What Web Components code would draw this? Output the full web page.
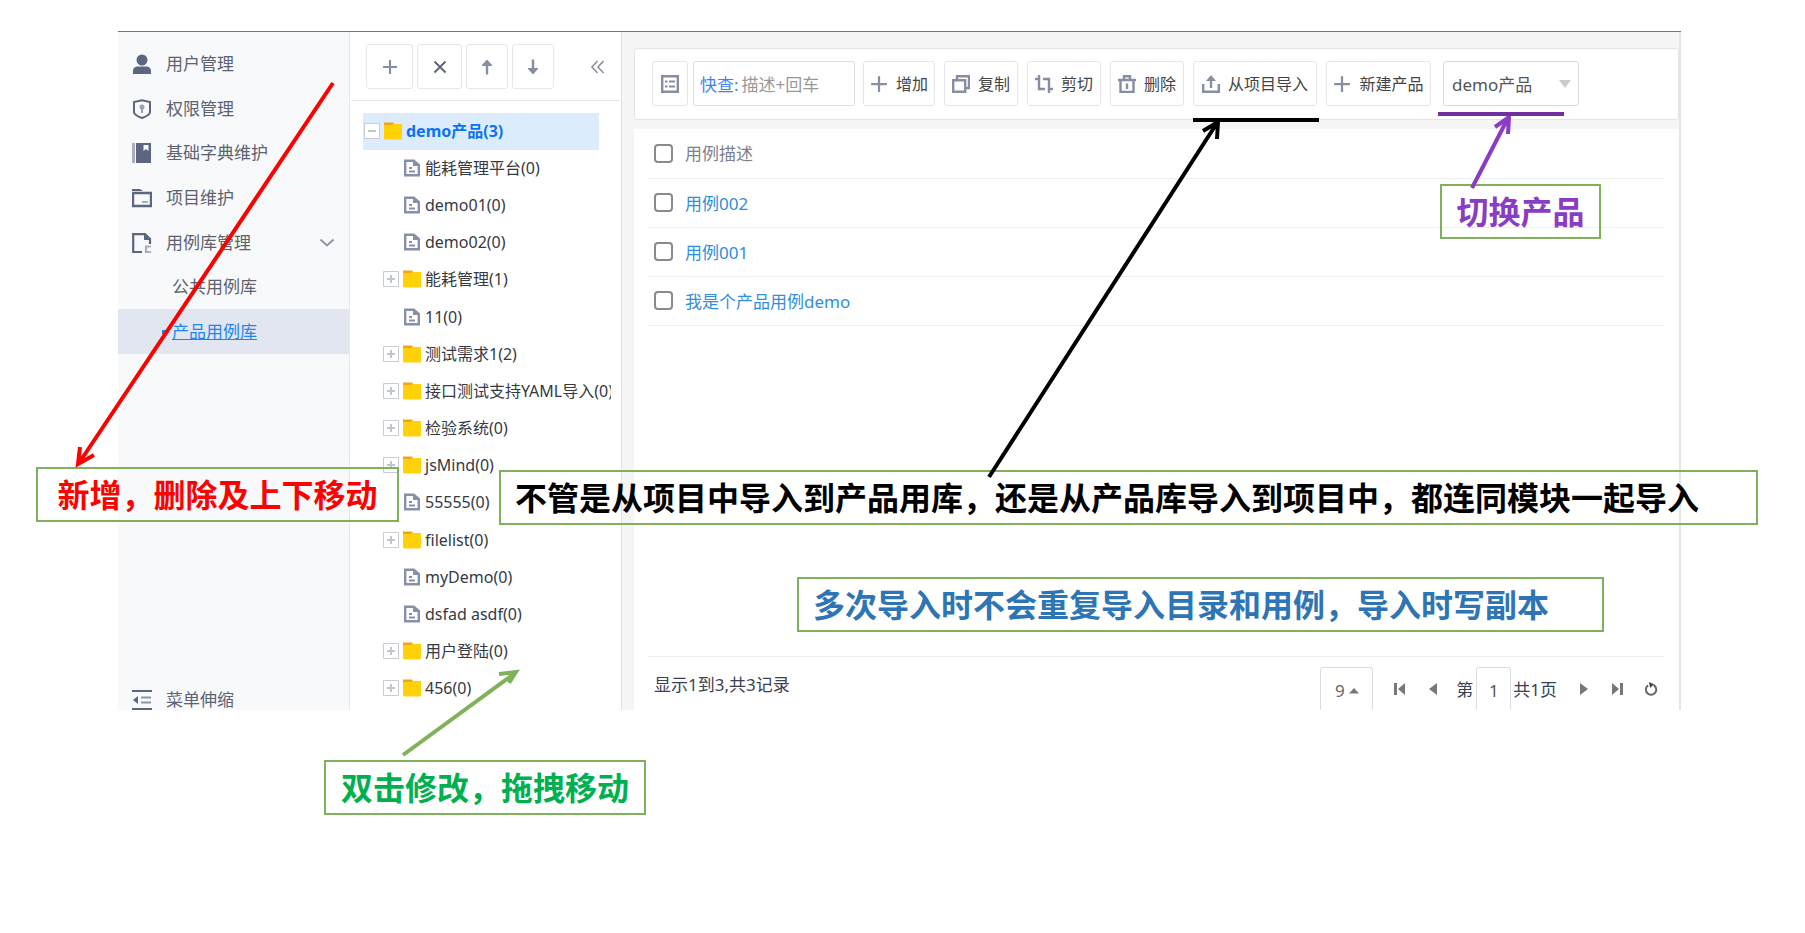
<!DOCTYPE html>
<html lang="zh-CN">
<head>
<meta charset="utf-8">
<meta name="viewport" content="width=device-width, initial-scale=1">
<title>产品用例库</title>
<style>
  body {
    margin: 0;
    background: #fff;
    color: #3c4250;
    font: 17px/24px "Noto Sans", "Noto Sans CJK SC", sans-serif;
  }
</style>
</head>
<body>
<case-app></case-app>

<script>
const ICONS = {
  user: ['0 0 20 20', '<circle cx="10" cy="6" r="5.5" fill="#5c6680"/><path d="M1 20v-3q0-4 4-4.600h10q4 .6 4 4.600v3z" fill="#5c6680"/>'],
  shield: ['0 0 20 20', '<path d="M10 1.200 18 3v10.500q-1 3-8 5.500-7-2.500-8-5.500V3z" fill="none" stroke="#5c6680" stroke-width="2"/><circle cx="10" cy="8" r="2.500" fill="#9aa1b3"/><path d="M9 9h2v5H9z" fill="#9aa1b3"/>'],
  book: ['0 0 20 20', '<path d="M0 0h3v20H0z" fill="#a9afbf"/><path d="M4 0h15v20H4z" fill="#5c6680"/><path d="M11.500 2h5v6l-2.500-2-2.500 2z" fill="#f7f9fb"/>'],
  project: ['0 0 20 20', '<path d="M0 3V1h8l3 2z" fill="#5c6680"/><path d="M1 5h18v13H1z" fill="none" stroke="#5c6680" stroke-width="2.400"/><path d="M10 13h6v2h-6z" fill="#a9afbf"/>'],
  library: ['0 0 20 20', '<path d="M10 19H1.200V1.200H13L18 6v5" fill="none" stroke="#5c6680" stroke-width="2.200"/><path d="M12 1v6h6z" fill="#5c6680"/><path d="M19 13.500h-5V19h5" fill="none" stroke="#a9afbf" stroke-width="2.200"/>'],
  fold: ['0 0 20 20', '<path d="M0 1h20M0 19h20" stroke="#5c6680" stroke-width="2"/><path d="M9 7.500h10M9 12.500h10" stroke="#8d95a8" stroke-width="2"/><path d="M6 6v8L1 10z" fill="#5c6680"/>'],
  down: ['0 0 16 10', '<path d="m1.500 1.500 6.500 6 6.500-6" fill="none" stroke="#8d95a8" stroke-width="2"/>'],
  plus: ['0 0 16 16', '<path d="M8 1v14M1 8h14" stroke="#868ea3" stroke-width="2"/>'],
  cross: ['0 0 16 16', '<path d="m2.500 2.500 11 11m0-11-11 11" stroke="#596074" stroke-width="1.800"/>'],
  up: ['0 0 16 16', '<path d="M8 5v10.500" stroke="#868ea3" stroke-width="2.400"/><path d="M3 7V6l5-5.500L13 6v1z" fill="#868ea3"/>'],
  drop: ['0 0 16 16', '<path d="M8 .5V11" stroke="#868ea3" stroke-width="2.400"/><path d="M3 9v1l5 5.500 5-5.500V9z" fill="#868ea3"/>'],
  collapse: ['0 0 16 16', '<path d="M7.500 2 2 8l5.500 6M13.500 2 8 8l5.500 6" fill="none" stroke="#8a8f9a" stroke-width="1.600"/>'],
  minusbox: ['0 0 16 16', '<path d="M.5.5h15v15H.5z" fill="#fff" stroke="#c9ccd2"/><path d="M4 8h8" stroke="#c2c5cb" stroke-width="2"/>'],
  plusbox: ['0 0 16 16', '<path d="M.5.5h15v15H.5z" fill="#fff" stroke="#c9ccd2"/><path d="M4 8h8M8 4v8" stroke="#c2c5cb" stroke-width="2"/>'],
  folder: ['0 0 18 18', '<path d="M0 5V.5h9L11 3v3z" fill="#f9a01b"/><path d="M0 3h8l2-1.500V2h8v14q0 1.500-1.500 1.500h-15Q0 17.500 0 16z" fill="#ffd109"/>'],
  file: ['0 0 16 18', '<path d="M1.200 1.700h8.600L14.800 6v10.300H1.200z" fill="#fff" stroke="#8890a8" stroke-width="2.400"/><path d="M9 1v6h6.500z" fill="#8890a8"/><path d="M5 9h3M5 12.500h6" stroke="#8890a8" stroke-width="2"/>'],
  list: ['0 0 18 18', '<path d="M1.200 1.200h15.600v15.600H1.200z" fill="none" stroke="#868ea3" stroke-width="2.400"/><path d="M4 6.500h2.500M8 6.500h6M4 11.500h2.500M8 11.500h6" stroke="#868ea3" stroke-width="2"/>'],
  copy: ['0 0 18 18', '<path d="M5 5V1.200h12V13h-3.500" fill="none" stroke="#868ea3" stroke-width="2.400"/><path d="M1.200 5.200h12v11.600h-12z" fill="none" stroke="#868ea3" stroke-width="2.400"/>'],
  cut: ['0 0 18 18', '<path d="M0 4h4m0-4v14h6M8 4h6v14m0-4h4" fill="none" stroke="#868ea3" stroke-width="2.400"/>'],
  bin: ['0 0 18 18', '<path d="M0 5h18M6 4V1.200h6V4M2.500 5v12h13V5" fill="none" stroke="#868ea3" stroke-width="2.400"/><path d="M9 8.500V14" stroke="#868ea3" stroke-width="2.400"/>'],
  share: ['0 0 18 18', '<path d="M1.200 9v7.800h15.600V9M9 13V4" fill="none" stroke="#868ea3" stroke-width="2.400"/><path d="M4 6 9 0l5 6z" fill="#868ea3"/>'],
  first: ['0 0 12 12', '<path d="M0 0h3v12H0zM11 0v12L4 6z" fill="#777"/>'],
  prev: ['0 0 12 12', '<path d="M10 0v12L2 6z" fill="#777"/>'],
  next: ['0 0 12 12', '<path d="M3 0v12l8-6z" fill="#777"/>'],
  last: ['0 0 12 12', '<path d="M9 0h3v12H9zM1 0v12l7-6z" fill="#777"/>'],
  reload: ['0 0 14 14', '<path d="M9.500 3A5.200 5.200 0 1 1 4 3.400" fill="none" stroke="#666" stroke-width="2"/><path d="m5 0 5 2.200L6 6z" fill="#444"/>'],
  caret: ['0 0 10 6', '<path d="M0 5.500 5 0l5 5.500z" fill="#777"/>']
};

const define = (name, html, setup) => {
  const template = document.createElement('template');
  template.innerHTML = html;
  customElements.define(name, class extends HTMLElement {
    connectedCallback() {
      if (this.shadowRoot) return;
      const root = this.attachShadow({ mode: 'open' });
      root.append(template.content.cloneNode(true));
      if (setup) setup(this, root);
    }
  });
};

define('ui-icon', `<style>
  :host { display: inline-block; flex: none; width: 18px; height: 18px; }
  svg { display: block; width: 100%; height: 100%; }
</style>`, (host, root) => {
  const [box, body] = ICONS[host.getAttribute('name')];
  root.innerHTML += `<svg viewBox="${box}" aria-hidden="true">${body}</svg>`;
});

define('nav-item', `<style>
  :host { display: flex; }
  a { flex: 1; display: flex; align-items: center; gap: 14px; padding: 0 14px; color: #5d6270; text-decoration: none; white-space: nowrap; }
  ui-icon { width: 20px; height: 20px; }
  .label { flex: 1; }
  .open { width: 16px; height: 10px; }
  :host([sub]) a { padding-left: 54px; }
  :host([active]) { background: #e2e6f1; }
  :host([active]) a { position: relative; color: #1e86ee; text-decoration: underline; }
  :host([active]) a::before { content: ""; position: absolute; left: 44px; width: 4px; height: 4px; background: #1e86ee; }
</style><a href="#"><span class="label"><slot></slot></span></a>`, (host, root) => {
  const a = root.querySelector('a');
  if (host.hasAttribute('icon')) a.insertAdjacentHTML('afterbegin', `<ui-icon name="${host.getAttribute('icon')}"></ui-icon>`);
  if (host.hasAttribute('expandable')) a.insertAdjacentHTML('beforeend', '<ui-icon class="open" name="down"></ui-icon>');
});

define('side-nav', `<style>
  :host { display: flex; flex-direction: column; justify-content: space-between; box-sizing: border-box; flex: none; width: 232px; padding-top: 10px; background: #f7f9fb; border-right: 1px solid #e6e8eb; }
  nav { display: grid; grid-auto-rows: 1fr; height: 312px; }
  .foot { height: 20px; }
</style>
<nav>
  <nav-item icon="user">用户管理</nav-item>
  <nav-item icon="shield">权限管理</nav-item>
  <nav-item icon="book">基础字典维护</nav-item>
  <nav-item icon="project">项目维护</nav-item>
  <nav-item icon="library" expandable>用例库管理</nav-item>
  <nav-item sub>公共用例库</nav-item>
  <nav-item sub active>产品用例库</nav-item>
</nav>
<nav-item class="foot" icon="fold">菜单伸缩</nav-item>`);

define('tool-button', `<style>
  :host { display: inline-flex; flex: none; }
  button { display: flex; align-items: center; justify-content: center; gap: 8px; width: 100%; height: 45px; padding: 0; background: #fff; border: 1px solid #e4e6ea; border-radius: 3px; color: #444; font: inherit; font-size: 16px; white-space: nowrap; }
  :host([plain]) button { border: 0; background: none; }
  ui-icon { width: var(--icon, 18px); height: var(--icon, 18px); }
</style><button type="button"><slot></slot></button>`, (host, root) => {
  const b = root.querySelector('button');
  b.insertAdjacentHTML('afterbegin', `<ui-icon name="${host.getAttribute('icon')}"></ui-icon>`);
  if (host.title) b.setAttribute('aria-label', host.title);
  if (!host.textContent.trim()) root.querySelector('slot').remove();
});

define('tree-node', `<style>
  :host { display: flex; align-items: center; box-sizing: border-box; padding: 0 0 2px 20px; font-size: 16px; color: #353a45; white-space: nowrap; }
  :host([root]) { width: 236px; padding-left: 1px; background: #dcecfd; color: #0a73f5; font-weight: bold; }
  .toggle { display: flex; width: 16px; height: 16px; padding: 0; border: 0; background: none; margin-right: 4px; }
  .toggle ui-icon { width: 16px; height: 16px; }
  .gap { width: 20px; flex: none; }
  .kind { margin-right: 4px; }
</style><span class="text"><slot></slot></span>`, (host, root) => {
  const folder = host.hasAttribute('folder');
  const toggle = host.hasAttribute('root') ? 'minusbox' : 'plusbox';
  root.querySelector('.text').insertAdjacentHTML('beforebegin', folder
    ? `<button class="toggle" type="button" aria-label="展开或收起"><ui-icon name="${toggle}"></ui-icon></button><ui-icon class="kind" name="folder"></ui-icon>`
    : '<span class="gap"></span><ui-icon class="kind" name="file"></ui-icon>');
});

define('tree-panel', `<style>
  :host { display: flex; flex-direction: column; box-sizing: border-box; flex: none; width: 272px; border-right: 1px solid #e3e3e3; }
  header { display: flex; align-items: center; gap: 4px; height: 45px; padding: 12px 15px 11px 15px; border-bottom: 1px solid #e6e6e6; margin-left: 1px; }
  header tool-button { width: 42px; --icon: 16px; }
  header .wide { width: 47px; }
  header .mid { width: 45px; }
  header .end { width: 16px; margin-left: auto; }
  .nodes { display: grid; grid-auto-rows: 1fr; height: 595px; margin: 12px 10px 2px 13px; overflow: hidden; }
</style>
<header>
  <tool-button class="wide" icon="plus" title="新增"></tool-button>
  <tool-button class="mid" icon="cross" title="删除"></tool-button>
  <tool-button icon="up" title="上移"></tool-button>
  <tool-button icon="drop" title="下移"></tool-button>
  <tool-button class="end" plain icon="collapse" title="收起"></tool-button>
</header>
<div class="nodes">
  <tree-node root folder>demo产品(3)</tree-node>
  <tree-node>能耗管理平台(0)</tree-node>
  <tree-node>demo01(0)</tree-node>
  <tree-node>demo02(0)</tree-node>
  <tree-node folder>能耗管理(1)</tree-node>
  <tree-node>11(0)</tree-node>
  <tree-node folder>测试需求1(2)</tree-node>
  <tree-node folder>接口测试支持YAML导入(0)</tree-node>
  <tree-node folder>检验系统(0)</tree-node>
  <tree-node folder>jsMind(0)</tree-node>
  <tree-node>55555(0)</tree-node>
  <tree-node folder>filelist(0)</tree-node>
  <tree-node>myDemo(0)</tree-node>
  <tree-node>dsfad asdf(0)</tree-node>
  <tree-node folder>用户登陆(0)</tree-node>
  <tree-node folder>456(0)</tree-node>
</div>`);

define('case-toolbar', `<style>
  :host { display: flex; align-items: center; gap: 9px; padding: 12px 17px 13px; background: #fff; border: 1px solid #e4e4e4; border-radius: 3px; }
  .icon { width: 36px; }
  .add { width: 72px; }
  .two { width: 74px; }
  .import { width: 124px; }
  .create { width: 105px; }
  .search { display: flex; align-items: center; gap: 3px; box-sizing: border-box; width: 162px; height: 45px; padding: 2px 6px 0; margin: 0 -1px 0 -4px; border: 1px solid #dcdde0; border-radius: 3px; }
  label { flex: none; color: #3f7ff5; }
  input { flex: 1; min-width: 0; padding: 0; border: 0; outline: 0; background: none; font: inherit; color: #444; }
  input::placeholder { color: #999; opacity: 1; }
  .pick { position: relative; margin-left: 3px; }
  .pick::after { content: ""; position: absolute; right: 8px; top: 19px; border: 6px solid transparent; border-top: 8px solid #ccc; border-bottom: 0; }
  select { appearance: none; display: block; box-sizing: border-box; width: 136px; height: 45px; padding: 2px 8px 0; border: 1px solid #d8dadd; border-radius: 3px; background: #fff; color: #555; font: inherit; }
</style>
<tool-button class="icon" icon="list" title="列表"></tool-button>
<div class="search"><label for="q">快查:</label><input id="q" type="text" placeholder="描述+回车"></div>
<tool-button class="add" icon="plus">增加</tool-button>
<tool-button class="two" icon="copy">复制</tool-button>
<tool-button class="two" icon="cut">剪切</tool-button>
<tool-button class="two" icon="bin">删除</tool-button>
<tool-button class="import" icon="share">从项目导入</tool-button>
<tool-button class="create" icon="plus">新建产品</tool-button>
<div class="pick"><select aria-label="切换产品"><option>demo产品</option></select></div>`);

define('case-list', `<style>
  :host { display: block; flex: 1; padding: 0 14px; margin-top: 9px; background: #fff; }
  table { width: 100%; border-collapse: collapse; }
  th, td { height: 48px; padding: 0; border-bottom: 1px solid #eee; text-align: left; font-weight: normal; }
  th { height: 49px; color: #7d828c; }
  .text { padding-top: 2px; height: 46px; }
  .check { width: 37px; padding-left: 6px; box-sizing: border-box; }
  input { appearance: none; display: block; box-sizing: border-box; width: 19px; height: 19px; margin: 0; border: 2px solid #8a8a8a; border-radius: 4px; background: #fff; }
  a { color: #2f8ee0; text-decoration: none; }
</style>
<table>
  <thead><tr><th class="check"><input type="checkbox" aria-label="全选"></th><th class="text">用例描述</th></tr></thead>
  <tbody>
    <tr><td class="check"><input type="checkbox" aria-label="用例002"></td><td class="text"><a href="#">用例002</a></td></tr>
    <tr><td class="check"><input type="checkbox" aria-label="用例001"></td><td class="text"><a href="#">用例001</a></td></tr>
    <tr><td class="check"><input type="checkbox" aria-label="我是个产品用例demo"></td><td class="text"><a href="#">我是个产品用例demo</a></td></tr>
  </tbody>
</table>`);

define('page-bar', `<style>
  :host { display: block; padding: 0 14px; background: #fff; }
  .bar { display: flex; justify-content: space-between; align-items: flex-end; height: 53px; padding: 0 7px 0 6px; border-top: 1px solid #f0f0f0; color: #3a4254; }
  .bar > span { padding-bottom: 13px; }
  .controls { display: flex; align-items: center; height: 43px; }
  .size { display: flex; align-items: center; justify-content: center; gap: 4px; box-sizing: border-box; width: 53px; height: 43px; margin-right: 21px; padding: 3px 0 0; background: #fff; border: 1px solid #dcdde0; border-bottom: 0; border-radius: 3px 3px 0 0; color: #666; font: inherit; }
  .size ui-icon { width: 10px; height: 6px; }
  tool-button { width: 12px; --icon: 12px; }
  .prev { margin: 0 17px 0 21px; }
  .next { margin: 0 22px 0 20px; }
  .reload { width: 14px; --icon: 14px; margin-left: 21px; }
  label { padding-top: 3px; }
  input { box-sizing: border-box; width: 35px; height: 43px; margin: 0 2px 0 3px; padding: 3px 0 0; border: 1px solid #dcdde0; border-bottom: 0; border-radius: 3px 3px 0 0; text-align: center; font: inherit; color: #555; background: #fff; }
</style>
<div class="bar">
  <span>显示1到3,共3记录</span>
  <div class="controls">
    <button class="size" type="button">9<ui-icon name="caret"></ui-icon></button>
    <tool-button plain icon="first" title="首页"></tool-button>
    <tool-button class="prev" plain icon="prev" title="上一页"></tool-button>
    <label for="page">第</label><input id="page" type="text" value="1"><label for="page">共1页</label>
    <tool-button class="next" plain icon="next" title="下一页"></tool-button>
    <tool-button plain icon="last" title="末页"></tool-button>
    <tool-button class="reload" plain icon="reload" title="刷新"></tool-button>
  </div>
</div>`);

define('note-label', `<style>
  :host { position: absolute; box-sizing: border-box; height: 55px; border: 2px solid #7fb05c; padding: 0 14px; font-size: 32px; line-height: 52px; font-weight: bold; white-space: nowrap; }
</style><slot></slot>`, host => {
  const [x, y, w] = host.getAttribute('at').split(' ');
  Object.assign(host.style, { left: x + 'px', top: y + 'px', width: w + 'px' });
});

define('note-layer', `<style>
  :host { position: absolute; inset: 0 auto auto 0; pointer-events: none; }
  svg { position: absolute; left: 0; top: 0; overflow: visible; fill: none; stroke-width: 4; }
  .center { text-align: center; }
</style>
<note-label class="center" at="36 467 363" style="color:#f00">新增，删除及上下移动</note-label>
<note-label at="499 470 1259" style="color:#000">不管是从项目中导入到产品用库，还是从产品库导入到项目中，都连同模块一起导入</note-label>
<note-label at="797 577 807" style="color:#2e75b6">多次导入时不会重复导入目录和用例，导入时写副本</note-label>
<note-label class="center" at="324 760 322" style="color:#00b050">双击修改，拖拽移动</note-label>
<note-label class="center" at="1440 184 161" style="color:#8a3cc4">切换产品</note-label>
<svg width="1" height="1" aria-hidden="true">
  <path stroke="#f00" d="M333 83 79 463M80 447 78 464 94 455"/>
  <path stroke="#000" d="M989 477 1217 123M1203 131 1218 122 1217 139M1193 120H1319"/>
  <path stroke="#8a3cc4" d="M1472 188 1508 118M1495 127 1509 117 1508 134"/>
  <path stroke="#7030a0" d="M1438 114H1564"/>
  <path stroke="#7fb25a" d="M403 755 515 673M499 674 516 672 509 683"/>
</svg>`);

define('case-app', `<style>
  :host { display: block; position: relative; box-sizing: border-box; min-height: 100vh; padding: 31px 124px 100px 118px; }
  .frame { display: flex; border-top: 1px solid #3f86c0; }
  main { flex: 1; min-width: 0; display: flex; flex-direction: column; box-sizing: border-box; padding: 16px 0 0 12px; background: #f5f5f5; border-right: 2px solid #e6e6e6; }
</style>
<div class="frame">
  <side-nav></side-nav>
  <tree-panel></tree-panel>
  <main><case-toolbar></case-toolbar><case-list></case-list><page-bar></page-bar></main>
</div>
<note-layer></note-layer>`);
</script>
</body>
</html>
